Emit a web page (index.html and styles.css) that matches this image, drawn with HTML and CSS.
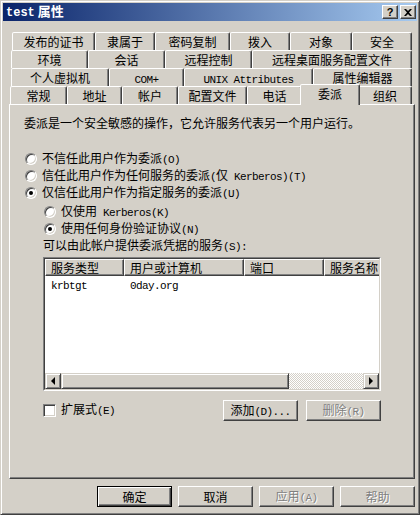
FILE: index.html
```html
<!DOCTYPE html>
<html lang="zh-CN">
<head>
  <meta charset="UTF-8">
  <title>test 属性</title>
  <link rel="stylesheet" href="styles.css">
</head>
<body>
  <div class="window">
    <div class="titlebar">
      <span class="title"><span class="title-en">test</span> 属性</span>
      <div class="cap-btns">
        <button class="cap-btn">?</button>
        <button class="cap-btn">
          <svg width="8" height="7" viewBox="0 0 8 7"><path d="M0 0h2l2 2 2-2h2L5 3.5 8 7H6L4 5 2 7H0l3-3.5z" fill="#000"/></svg>
        </button>
      </div>
    </div>

    <div class="sheet">
      <div class="tab-row row1">
        <div class="tab">发布的证书</div>
        <div class="tab">隶属于</div>
        <div class="tab">密码复制</div>
        <div class="tab">拨入</div>
        <div class="tab">对象</div>
        <div class="tab">安全</div>
      </div>
      <div class="tab-row row2">
        <div class="tab">环境</div>
        <div class="tab">会话</div>
        <div class="tab">远程控制</div>
        <div class="tab">远程桌面服务配置文件</div>
      </div>
      <div class="tab-row row3">
        <div class="tab">个人虚拟机</div>
        <div class="tab"><span class="en">COM+</span></div>
        <div class="tab"><span class="en">UNIX Attributes</span></div>
        <div class="tab">属性编辑器</div>
      </div>
      <div class="tab-row row4">
        <div class="tab">常规</div>
        <div class="tab">地址</div>
        <div class="tab">帐户</div>
        <div class="tab">配置文件</div>
        <div class="tab">电话</div>
        <div class="tab active">委派</div>
        <div class="tab">组织</div>
      </div>

      <div class="panel">
        <p class="intro">委派是一个安全敏感的操作，它允许服务代表另一个用户运行。</p>

        <div class="opts">
          <div class="opt"><span class="radio"></span><span>不信任此用户作为委派<span class="en">(O)</span></span></div>
          <div class="opt"><span class="radio"></span><span>信任此用户作为任何服务的委派<span class="en">(</span>仅<span class="en"> Kerberos)(T)</span></span></div>
          <div class="opt"><span class="radio on"></span><span>仅信任此用户作为指定服务的委派<span class="en">(U)</span></span></div>
          <div class="opt sub first"><span class="radio"></span><span>仅使用<span class="en"> Kerberos(K)</span></span></div>
          <div class="opt sub"><span class="radio on"></span><span>使用任何身份验证协议<span class="en">(N)</span></span></div>
        </div>

        <div class="list-label">可以由此帐户提供委派凭据的服务<span class="en">(S):</span></div>

        <div class="list">
          <div class="list-inner">
            <div class="list-head">
              <div>服务类型</div>
              <div>用户或计算机</div>
              <div>端口</div>
              <div>服务名称</div>
            </div>
            <div class="rows">
              <div class="list-row">
                <div><span class="en">krbtgt</span></div>
                <div><span class="en">0day.org</span></div>
                <div></div>
                <div></div>
              </div>
            </div>
            <div class="hscroll">
              <div class="sb-btn"><span class="arrow-left"></span></div>
              <div class="thumb"></div>
              <div class="track"></div>
              <div class="sb-btn"><span class="arrow-right"></span></div>
            </div>
          </div>
        </div>

        <div class="list-foot">
          <div class="check-label"><span class="check"></span><span>扩展式<span class="en">(E)</span></span></div>
          <button class="btn add">添加<span class="en">(D)...</span></button>
          <button class="btn" disabled>删除<span class="en">(R)</span></button>
        </div>
      </div>

      <div class="dialog-buttons">
        <button class="btn default">确定</button>
        <button class="btn">取消</button>
        <button class="btn" disabled>应用<span class="en">(A)</span></button>
        <button class="btn" disabled>帮助</button>
      </div>
    </div>
  </div>
</body>
</html>
```

FILE: styles.css
```css
* {
  box-sizing: border-box;
}

html, body {
  margin: 0;
  padding: 0;
}

body {
  width: 420px;
  height: 515px;
  overflow: hidden;
  background: #d4d0c8;
  color: #000;
  font: 12px/14px "Noto Sans CJK SC", sans-serif;
}

.en {
  font-family: "Liberation Mono", monospace;
  font-size: 11px;
  letter-spacing: -0.6px;
}

.window {
  height: 515px;
  border: 1px solid;
  border-color: #d4d0c8 #404040 #404040 #d4d0c8;
  box-shadow: inset 1px 1px #fff, inset -1px -1px #808080;
  padding: 2px;
}

/* title bar */
.titlebar {
  height: 18px;
  display: flex;
  align-items: center;
  justify-content: space-between;
  padding-left: 3px;
  background: linear-gradient(to right, #0a246a, #a6caf0);
}

.title {
  color: #fff;
  font-weight: bold;
  font-size: 13px;
}

.title-en {
  font-family: "Liberation Mono", monospace;
  font-size: 12px;
}

.cap-btns {
  display: flex;
  gap: 2px;
  margin-right: 1px;
}

.cap-btn {
  width: 16px;
  height: 14px;
  padding: 0;
  display: flex;
  align-items: center;
  justify-content: center;
  background: #d4d0c8;
  border: 1px solid;
  border-color: #fff #404040 #404040 #fff;
  box-shadow: inset -1px -1px #808080;
  font: bold 11px/1 "Liberation Sans", sans-serif;
  color: #000;
}

/* property sheet */
.sheet {
  margin: 11px 2px 0 6px;
}

.tab-row {
  display: grid;
  height: 18px;
}

.row1 { margin: 0 3px 0 3px; grid-template-columns: 83px 60px 75px 60px 62px 1fr; }
.row2 { margin: 0 3px 0 2px; grid-template-columns: 77px 77px 87px 1fr; }
.row3 { margin: 0 3px 0 2px; grid-template-columns: 98px 75px 129px 1fr; }
.row4 { margin: 0 3px 0 1px; grid-template-columns: 57px 55px 56px 69px 55px 56px 1fr; }

.tab {
  border: 1px solid;
  border-bottom: 0;
  border-color: #fff #404040 transparent #fff;
  border-radius: 2px 2px 0 0;
  box-shadow: inset -1px 0 #808080;
  background: #d4d0c8;
  text-align: center;
  line-height: 17px;
  white-space: nowrap;
  overflow: hidden;
}

.tab.active {
  position: relative;
  z-index: 1;
  margin: -2px -2px -1px;
}

.panel {
  height: 375px;
  border: 1px solid;
  border-color: #fff #404040 #404040 #fff;
  box-shadow: inset -1px -1px #808080;
  padding: 11px 0 0 14px;
}

.intro {
  margin: 0;
}

.opts {
  margin-top: 20px;
}

.opt {
  display: flex;
  align-items: center;
  gap: 5px;
  height: 17px;
  margin-left: 1px;
  white-space: nowrap;
}

.opt.sub {
  margin-left: 20px;
}

.opt.first {
  margin-top: 2px;
}

.radio {
  position: relative;
  flex: none;
  width: 12px;
  height: 12px;
  border-radius: 50%;
  border: 1px solid;
  border-color: #808080 #fff #fff #808080;
  background: #fff;
  box-shadow: inset 1px 1px #404040, inset -1px -1px #d4d0c8;
}

.radio.on::after {
  content: '';
  position: absolute;
  left: 3px;
  top: 3px;
  width: 4px;
  height: 4px;
  border-radius: 50%;
  background: #000;
}

.list-label {
  margin: 1px 0 0 19px;
}

/* list view */
.list {
  margin: 3px 0 0 19px;
  width: 338px;
  height: 134px;
  border: 1px solid;
  border-color: #808080 #fff #fff #808080;
}

.list-inner {
  height: 100%;
  display: flex;
  flex-direction: column;
  overflow: hidden;
  background: #fff;
  border: 1px solid;
  border-color: #404040 #d4d0c8 #d4d0c8 #404040;
}

.list-head,
.list-row {
  display: grid;
  grid-template-columns: 79px 120px 80px 80px;
  white-space: nowrap;
}

.list-head div {
  height: 17px;
  padding-left: 5px;
  line-height: 15px;
  background: #d4d0c8;
  border: 1px solid;
  border-color: #fff #404040 #404040 #fff;
  box-shadow: inset -1px -1px #808080;
}

.rows {
  flex: 1;
}

.list-row div {
  height: 16px;
  line-height: 16px;
  padding-left: 6px;
}

.hscroll {
  display: flex;
  height: 16px;
  flex: none;
}

.sb-btn,
.thumb {
  background: #d4d0c8;
  border: 1px solid;
  border-color: #d4d0c8 #404040 #404040 #d4d0c8;
  box-shadow: inset 1px 1px #fff, inset -1px -1px #808080;
}

.sb-btn {
  width: 16px;
  flex: none;
  display: flex;
  align-items: center;
  justify-content: center;
}

.thumb {
  width: 228px;
  flex: none;
}

.track {
  flex: 1;
  background: repeating-conic-gradient(#fff 0 25%, #d4d0c8 0 50%) 0 0 / 2px 2px;
}

.arrow-left,
.arrow-right {
  width: 0;
  height: 0;
  border-style: solid;
  border-color: transparent;
}

.arrow-left {
  border-width: 4px 4px 4px 0;
  border-right-color: #000;
}

.arrow-right {
  border-width: 4px 0 4px 4px;
  border-left-color: #000;
}

.list-foot {
  display: flex;
  align-items: flex-start;
  gap: 8px;
  width: 338px;
  margin: 9px 0 0 19px;
}

.check-label {
  display: flex;
  align-items: center;
  gap: 5px;
  margin-top: 2px;
}

.check {
  width: 13px;
  height: 13px;
  border: 1px solid;
  border-color: #808080 #fff #fff #808080;
  background: #fff;
  box-shadow: inset 1px 1px #404040, inset -1px -1px #d4d0c8;
}

.add {
  margin-left: auto;
}

/* push buttons */
.btn {
  width: 75px;
  height: 21px;
  padding: 0;
  background: #d4d0c8;
  color: #000;
  font: inherit;
  border: 1px solid;
  border-color: #fff #404040 #404040 #fff;
  box-shadow: inset -1px -1px #808080;
}

.btn.default {
  border-color: #000;
  box-shadow: inset 1px 1px #fff, inset -1px -1px #404040, inset -2px -2px #808080;
}

.btn:disabled {
  color: #808080;
  text-shadow: 1px 1px #fff;
}

.dialog-buttons {
  display: flex;
  justify-content: flex-end;
  gap: 6px;
  margin-top: 7px;
}
```
